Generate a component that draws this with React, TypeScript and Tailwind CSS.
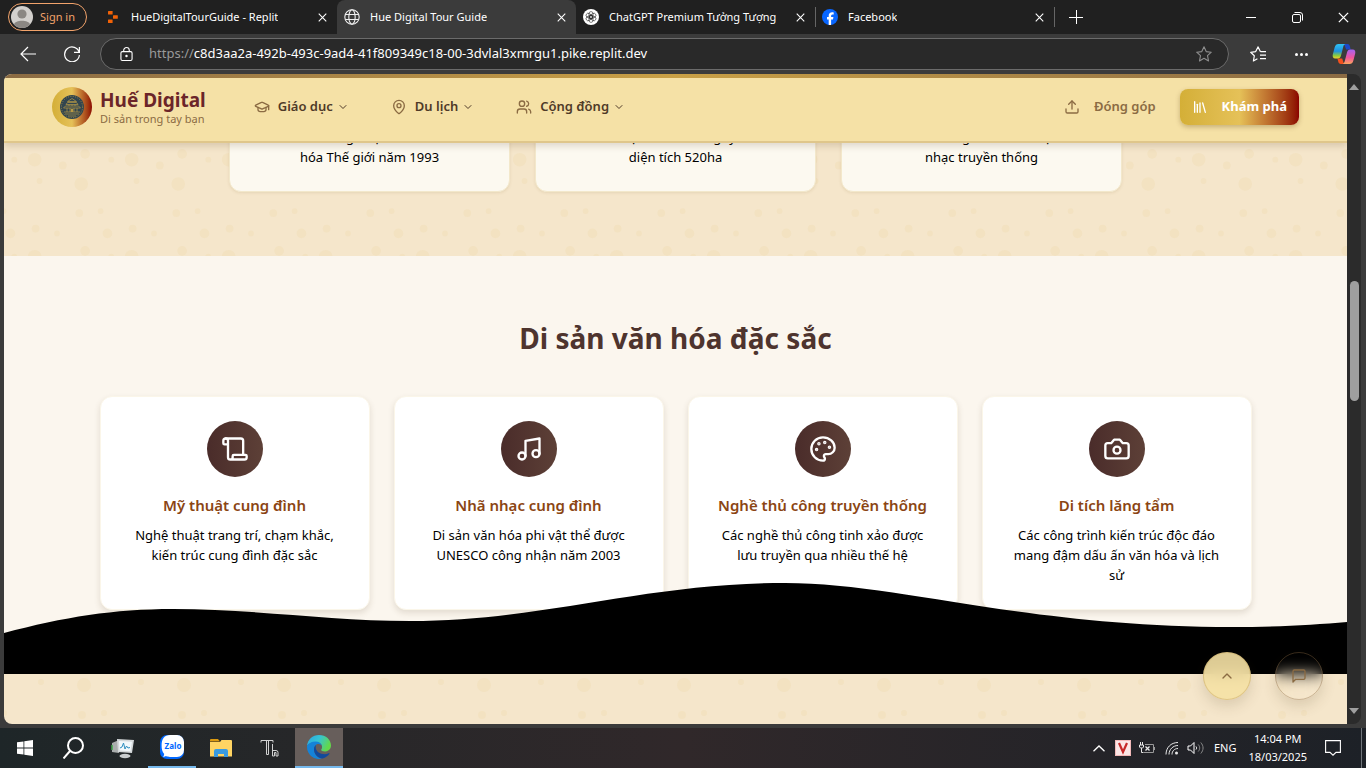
import React from "react";
import {
  ChevronDown,
  ChevronUp,
  GraduationCap,
  Library,
  MapPin,
  Music,
  Scroll,
  Upload,
  Users,
} from "lucide-react";

type IconProps = { className?: string };

function PaletteIcon({ className }: IconProps) {
  return (
    <svg viewBox="0 0 24 24" fill="none" stroke="currentColor" strokeWidth="2" strokeLinecap="round" strokeLinejoin="round" className={className} aria-hidden="true">
      <circle cx="13.5" cy="6.5" r=".5" fill="currentColor" />
      <circle cx="17.5" cy="10.5" r=".5" fill="currentColor" />
      <circle cx="8.5" cy="7.5" r=".5" fill="currentColor" />
      <circle cx="6.5" cy="12.5" r=".5" fill="currentColor" />
      <path d="M12 2C6.5 2 2 6.5 2 12s4.5 10 10 10c.926 0 1.648-.746 1.648-1.688 0-.437-.18-.835-.437-1.125-.29-.289-.438-.652-.438-1.125a1.64 1.64 0 0 1 1.668-1.668h1.996c3.051 0 5.555-2.503 5.555-5.554C21.965 6.012 17.461 2 12 2z" />
    </svg>
  );
}

function CameraIcon({ className }: IconProps) {
  return (
    <svg viewBox="0 0 24 24" fill="none" stroke="currentColor" strokeWidth="2" strokeLinecap="round" strokeLinejoin="round" className={className} aria-hidden="true">
      <path d="M14.5 4h-5L7 7H4a2 2 0 0 0-2 2v9a2 2 0 0 0 2 2h16a2 2 0 0 0 2-2V9a2 2 0 0 0-2-2h-3l-2.5-3z" />
      <circle cx="12" cy="13" r="3" />
    </svg>
  );
}

function MessageIcon({ className }: IconProps) {
  return (
    <svg viewBox="0 0 24 24" fill="none" stroke="currentColor" strokeWidth="2" strokeLinecap="round" strokeLinejoin="round" className={className} aria-hidden="true">
      <path d="M21 15a2 2 0 0 1-2 2H7l-4 4V5a2 2 0 0 1 2-2h14a2 2 0 0 1 2 2z" />
    </svg>
  );
}

function CloseIcon({ className }: IconProps) {
  return (
    <svg viewBox="0 0 10 10" fill="none" stroke="currentColor" strokeWidth="1.2" className={className} aria-hidden="true">
      <path d="M.8.8l8.4 8.4M9.2.8L.8 9.2" />
    </svg>
  );
}

function ReplitIcon() {
  return (
    <svg viewBox="0 0 16 16" className="h-4 w-4 shrink-0" fill="#f26207" aria-hidden="true">
      <rect x="3" y="2" width="4.600" height="3.600" rx=".5" />
      <rect x="8" y="6.200" width="4.800" height="3.600" rx=".5" />
      <rect x="3" y="10.400" width="4.600" height="3.600" rx=".5" />
    </svg>
  );
}

function GlobeIcon() {
  return (
    <svg viewBox="0 0 16 16" fill="none" stroke="#f0f0f0" strokeWidth="1.100" className="h-4 w-4 shrink-0" aria-hidden="true">
      <circle cx="8" cy="8" r="7.200" />
      <ellipse cx="8" cy="8" rx="3.200" ry="7.200" />
      <path d="M1.400 5.500h13.200M1.400 10.500h13.200" />
    </svg>
  );
}

function ChatIcon() {
  return (
    <svg viewBox="0 0 16 16" className="h-4 w-4 shrink-0" aria-hidden="true">
      <circle cx="8" cy="8" r="8" fill="#fff" />
      <g fill="none" stroke="#222" strokeWidth=".6">
        <rect x="6" y="2.600" width="4" height="6.800" rx="2" />
        <rect x="6" y="2.600" width="4" height="6.800" rx="2" transform="rotate(60 8 8)" />
        <rect x="6" y="2.600" width="4" height="6.800" rx="2" transform="rotate(120 8 8)" />
        <rect x="6" y="2.600" width="4" height="6.800" rx="2" transform="rotate(180 8 8)" />
        <rect x="6" y="2.600" width="4" height="6.800" rx="2" transform="rotate(240 8 8)" />
        <rect x="6" y="2.600" width="4" height="6.800" rx="2" transform="rotate(300 8 8)" />
      </g>
    </svg>
  );
}

function FacebookIcon() {
  return (
    <svg viewBox="0 0 16 16" className="h-4 w-4 shrink-0" aria-hidden="true">
      <circle cx="8" cy="8" r="8" fill="#0866ff" />
      <path fill="#fff" d="M6.700 15.900v-5.400H5V8.100h1.700V7c0-2.600 1.200-3.800 3.600-3.800.4 0 1.100.1 1.400.2v2.100h-.9c-1.200 0-1.700.5-1.700 1.600v1h2.300l-.4 2.400H9.100v5.400a8 8 0 0 1-2.400 0z" />
    </svg>
  );
}

function Tab({ icon, title, active, divider }: { icon: React.ReactNode; title: string; active?: boolean; divider?: boolean }) {
  return (
    <div
      className={
        active
          ? "flex h-[34px] w-[239px] items-center rounded-t-lg bg-[#3b3b3b] pl-[7px] pr-[7px]"
          : "flex h-[34px] w-[239px] items-center pl-[7px] pr-[7px]"
      }
    >
      <button type="button" className="flex min-w-0 flex-1 items-center gap-[10px] text-left text-[11px] text-white">
        {icon}
        <span className="truncate">{title}</span>
      </button>
      <button type="button" aria-label={"Đóng " + title} className="flex h-4 w-4 items-center justify-center text-white">
        <CloseIcon className="h-[9px] w-[9px]" />
      </button>
      {divider && <span className="ml-[7px] -mr-2 h-5 w-px bg-[#666]" />}
    </div>
  );
}

function TabBar() {
  return (
    <div className="flex h-[34px] shrink-0 items-center bg-[#202020]">
      <button type="button" className="ml-2 mr-[11px] flex h-7 w-[79px] items-center gap-[7px] rounded-full border border-[#f2a36b] pl-[2px] text-[11px] text-[#f2a36b]">
        <svg viewBox="0 0 22 22" className="h-[22px] w-[22px]" aria-hidden="true">
          <circle cx="11" cy="11" r="11" fill="#d3d0cd" />
          <circle cx="11" cy="8" r="4.600" fill="#8b8783" />
          <path d="M3 18.500c1-5 15-5 16 0a11 11 0 0 1-16 0z" fill="#8b8783" />
        </svg>
        Sign in
      </button>
      <Tab icon={<ReplitIcon />} title="HueDigitalTourGuide - Replit" />
      <Tab icon={<GlobeIcon />} title="Hue Digital Tour Guide" active />
      <Tab icon={<ChatIcon />} title="ChatGPT Premium Tưởng Tượng" divider />
      <Tab icon={<FacebookIcon />} title="Facebook" divider />
      <button type="button" aria-label="Thẻ mới" className="ml-3 p-[3px] text-white">
        <svg viewBox="0 0 14 14" fill="none" stroke="currentColor" className="h-[14px] w-[14px]" aria-hidden="true">
          <path d="M7.500 0v14M0 7.500h14" />
        </svg>
      </button>
      <div className="ml-auto flex text-white">
        <button type="button" aria-label="Thu nhỏ" className="flex h-[34px] w-[46px] items-center justify-center">
          <span className="h-px w-[10px] bg-white" />
        </button>
        <button type="button" aria-label="Khôi phục" className="flex h-[34px] w-[46px] items-center justify-center">
          <svg viewBox="0 0 11 11" fill="none" stroke="currentColor" className="h-[11px] w-[11px]" aria-hidden="true">
            <rect x=".5" y="2.500" width="8" height="8" rx="1.500" />
            <path d="M2.500 .5h5.500a2.500 2.500 0 0 1 2.500 2.500v5.500" />
          </svg>
        </button>
        <button type="button" aria-label="Đóng cửa sổ" className="flex h-[34px] w-[46px] items-center justify-center">
          <CloseIcon className="h-[11px] w-[11px]" />
        </button>
      </div>
    </div>
  );
}

function Toolbar() {
  return (
    <div className="flex h-10 shrink-0 items-center bg-[#3b3b3b] pr-[10px] text-white">
      <button type="button" aria-label="Quay lại" className="ml-5">
        <svg viewBox="0 0 16 16" fill="none" stroke="currentColor" strokeWidth="1.200" className="h-4 w-4" aria-hidden="true">
          <path d="M16 8H1M8 1L1 8l7 7" />
        </svg>
      </button>
      <button type="button" aria-label="Tải lại" className="ml-7">
        <svg viewBox="0 0 16 16" fill="none" stroke="currentColor" strokeWidth="1.200" className="h-4 w-4" aria-hidden="true">
          <path d="M15.200 6.500A7.400 7.400 0 1 0 15.400 9M15.400 1v5.300H10" />
        </svg>
      </button>
      <label className="ml-5 flex h-8 flex-1 items-center rounded-full border border-[#6b6b6b] bg-[#292929] pl-[19px] pr-4 text-[13px]">
        <svg viewBox="0 0 14 16" fill="none" stroke="currentColor" strokeWidth="1.200" className="mr-4 h-4 w-[13px] shrink-0" aria-hidden="true">
          <rect x="1" y="5.500" width="12" height="9.500" rx="1.500" />
          <path d="M4 5.500V4a3 3 0 0 1 6 0v1.500" />
          <circle cx="7" cy="10.200" r=".7" fill="currentColor" />
        </svg>
        <span className="text-[#9a9a9a]">https://</span>
        <input
          aria-label="Địa chỉ trang"
          className="min-w-0 flex-1 bg-transparent text-white outline-none"
          defaultValue="c8d3aa2a-492b-493c-9ad4-41f809349c18-00-3dvlal3xmrgu1.pike.replit.dev"
        />
        <svg viewBox="0 0 16 16" fill="none" stroke="#8e8e8e" strokeWidth="1.100" strokeLinejoin="round" className="h-4 w-4" aria-hidden="true">
          <path d="M8 .8l2.200 4.800 5.100.6-3.800 3.500 1 5.200L8 12.300l-4.500 2.600 1-5.200L.7 6.200l5.100-.6z" />
        </svg>
      </label>
      <button type="button" aria-label="Mục ưa thích" className="ml-[21px]">
        <svg viewBox="0 0 16 16" fill="none" stroke="currentColor" strokeWidth="1.200" strokeLinejoin="round" className="h-4 w-4" aria-hidden="true">
          <path d="M10.500 5.700L8 .9 5.700 5.600l-5 .7 3.600 3.500-.9 5.200 4-2.200M10.500 5.700H16M10 9.200h6M10 12.700h6" />
        </svg>
      </button>
      <button type="button" aria-label="Thêm" className="ml-[29px] flex gap-[2px]">
        <span className="h-[3px] w-[3px] rounded-full bg-white" />
        <span className="h-[3px] w-[3px] rounded-full bg-white" />
        <span className="h-[3px] w-[3px] rounded-full bg-white" />
      </button>
      <button type="button" aria-label="Copilot" className="ml-6">
        <svg viewBox="0 0 24 22" className="h-[22px] w-6" aria-hidden="true">
          <defs>
            <linearGradient id="copilotA" x1="0" y1="0" x2="0" y2="1">
              <stop offset="0" stopColor="#2fc4f5" />
              <stop offset=".5" stopColor="#1f8fe0" />
              <stop offset=".8" stopColor="#8ccb3c" />
              <stop offset="1" stopColor="#f2d02e" />
            </linearGradient>
            <linearGradient id="copilotB" x1="0" y1="0" x2="0" y2="1">
              <stop offset="0" stopColor="#a463f2" />
              <stop offset=".55" stopColor="#f0559f" />
              <stop offset="1" stopColor="#fba45c" />
            </linearGradient>
          </defs>
          <path d="M12 1h3.500c1.400 0 2 .8 2.300 2l.9 3.500h-4.500z" fill="#1c48c8" />
          <path d="M12 21H8.700c-1.400 0-2-.9-2.400-2.200L5.400 15.500h4.800z" fill="#f4511e" />
          <path d="M6.500 1h7c-1.400.4-1.900 1.400-2.300 2.900L9 12.500c-.5 2-1.400 3-3.300 3H3.300C1 15.500.3 13.600.8 11.500l1.900-7.200C3.300 2.200 4.500 1 6.500 1z" fill="url(#copilotA)" />
          <path d="M17.500 21h-7c1.400-.4 1.900-1.400 2.300-2.900L15 9.500c.5-2 1.400-3 3.300-3h2.400c2.300 0 3 1.900 2.500 4l-1.900 7.200c-.6 2.100-1.800 3.300-3.800 3.300z" fill="url(#copilotB)" />
        </svg>
      </button>
    </div>
  );
}

const DOTS: [number, number, number][] = [
  [11, 11, 7], [59, 36, 7], [16, 33, 3], [79, 64, 3], [34, 87, 3], [90, 11, 3],
  [12, 82, 4], [40, 17, 4], [63, 5, 5], [57, 66, 4], [86, 87, 5],
];

function DotPattern({ id, size, x, y }: { id: string; size: number; x: number; y: number }) {
  return (
    <svg className="absolute inset-0 h-full w-full" aria-hidden="true">
      <defs>
        <pattern id={id} width={size} height={size} x={x} y={y} patternUnits="userSpaceOnUse" viewBox="0 0 100 100">
          {DOTS.map(([cx, cy, r]) => (
            <circle key={cx + "-" + cy} cx={cx} cy={cy} r={r} fill="#d4af37" fillOpacity=".07" />
          ))}
        </pattern>
      </defs>
      <rect width="100%" height="100%" fill={"url(#" + id + ")"} />
    </svg>
  );
}

function LogoMark() {
  return (
    <svg viewBox="0 0 24 24" className="h-6 w-6" fill="none" aria-hidden="true">
      <circle cx="12" cy="12" r="12" fill="#31454f" />
      <g stroke="#b99a45" strokeWidth=".7">
        <circle cx="12" cy="12" r="10.600" strokeDasharray="1 1.400" />
        <path d="M12 3.500l4.500 3h-9zM6 9.500l1.500-2h9l1.500 2zM3.500 13l2-2h13l2 2zM4 17h16M5 19h14M8 21h8" />
        <path d="M7 13v4M10 13v4M14 13v4M17 13v4M9 9.500V11M15 9.500V11M12 9.500V11" />
      </g>
      <path d="M10.800 14h2.400v3h-2.400z" fill="#b99a45" />
    </svg>
  );
}

const NAV = [
  { label: "Giáo dục", Icon: GraduationCap },
  { label: "Du lịch", Icon: MapPin },
  { label: "Cộng đồng", Icon: Users },
];

function SiteHeader() {
  return (
    <header className="absolute inset-x-0 top-0 z-10 shadow-[0_3px_7px_rgba(60,40,10,0.16)]">
      <div className="h-1 bg-linear-to-r from-[#8b6b43] via-[#c9a045] to-[#8b6b43]" />
      <div className="flex h-[65px] items-center border-b-2 border-[#dfc68b] bg-[#f5e1a6] px-12 pb-[6px]">
        <a href="#home" className="flex items-center gap-2">
          <span className="flex h-10 w-10 items-center justify-center rounded-full bg-linear-to-r from-[#d4af37] via-[#e5c158] to-[#8b0000]">
            <LogoMark />
          </span>
          <span className="flex flex-col">
            <span className="text-[19px] leading-6 font-bold text-[#6b2529]">Huế Digital</span>
            <span className="text-[11px] leading-[14px] text-[#8b6b43]">Di sản trong tay bạn</span>
          </span>
        </a>
        <nav className="ml-12 flex gap-[42px]">
          {NAV.map(({ label, Icon }) => (
            <button key={label} type="button" className="flex items-center text-[13px] font-semibold text-[#4f3a28]">
              <Icon className="mr-2 h-4 w-4 text-[#8b6b43]" strokeWidth={2} />
              {label}
              <ChevronDown className="ml-1 h-3 w-3" strokeWidth={2} />
            </button>
          ))}
        </nav>
        <div className="ml-auto flex items-center gap-6">
          <button type="button" className="flex items-center gap-[14px] text-[13px] font-semibold text-[#8b6b43]">
            <Upload className="h-4 w-4" strokeWidth={2} />
            Đóng góp
          </button>
          <button
            type="button"
            className="flex h-9 items-center gap-[14px] rounded-lg bg-linear-to-r from-[#d4af37] via-[#e5c158] to-[#8b0000] px-3 text-[13px] font-bold text-white shadow-[0_2px_5px_rgba(90,60,10,0.3)]"
          >
            <Library className="h-4 w-4" strokeWidth={2} />
            Khám phá
          </button>
        </div>
      </div>
    </header>
  );
}

const FACTS = [
  ["UNESCO công nhận là Di sản Văn", "hóa Thế giới năm 1993"],
  ["Kinh đô lịch sử triều Nguyễn với", "diện tích 520ha"],
  ["Tinh hoa cung đình và lễ hội của", "nhạc truyền thống"],
];

const HERITAGE = [
  { title: "Mỹ thuật cung đình", text: "Nghệ thuật trang trí, chạm khắc, kiến trúc cung đình đặc sắc", icon: <Scroll className="h-7 w-7" /> },
  { title: "Nhã nhạc cung đình", text: "Di sản văn hóa phi vật thể được UNESCO công nhận năm 2003", icon: <Music className="h-7 w-7" /> },
  { title: "Nghề thủ công truyền thống", text: "Các nghề thủ công tinh xảo được lưu truyền qua nhiều thế hệ", icon: <PaletteIcon className="h-7 w-7" /> },
  { title: "Di tích lăng tẩm", text: "Các công trình kiến trúc độc đáo mang đậm dấu ấn văn hóa và lịch sử", icon: <CameraIcon className="h-7 w-7" /> },
];

function Page() {
  return (
    <div className="relative flex min-w-0 flex-1 flex-col overflow-hidden rounded-l-lg bg-[#f5e6cb] text-black">
      <SiteHeader />
      <section className="relative flex h-[182px] shrink-0 items-end justify-center overflow-hidden pb-16">
        <DotPattern id="dotsTop" size={97} x={20} y={75} />
        <div className="relative grid w-full max-w-[893px] grid-cols-3 gap-[25px]">
          {FACTS.map(([first, second]) => (
            <div key={second} className="rounded-xl border border-[#f3e8cb] bg-[#fcf9f0] px-2 pt-6 pb-6 text-center text-[13px] leading-5 shadow-[0_1px_3px_rgba(120,90,30,0.12)]">
              <p>
                {first}
                <br />
                {second}
              </p>
            </div>
          ))}
        </div>
      </section>
      <section className="relative flex shrink-0 flex-col items-center bg-[#fbf6ee] px-6 py-16">
        <h2 className="text-[28px] leading-9 font-bold text-[#4e342e]">Di sản văn hóa đặc sắc</h2>
        <div className="mt-10 grid w-full max-w-6xl grid-cols-4 gap-6">
          {HERITAGE.map((item) => (
            <article key={item.title} className="flex flex-col items-center rounded-xl border border-[#fbf6e9] bg-white p-6 text-center shadow-[0_3px_6px_rgba(80,60,30,0.14)]">
              <div className="flex h-14 w-14 items-center justify-center rounded-full bg-linear-to-r from-[#4a2c2a] to-[#5d4037] text-white">
                {item.icon}
              </div>
              <h3 className="mt-4 text-[15px] leading-6 font-semibold whitespace-nowrap text-[#8b4513]">{item.title}</h3>
              <p className="mt-2 text-[13px] leading-5">{item.text}</p>
            </article>
          ))}
        </div>
        <svg viewBox="0 0 1343 91" preserveAspectRatio="none" className="absolute inset-x-0 bottom-0 h-[91px] w-full" aria-hidden="true">
          <path d="M0 50C60 34 110 26 169 26C250 26 326 38 406 38C540 38 640 0 781 0C895 0 1020 44 1228 44C1270 44 1310 42 1343 39V91H0Z" />
        </svg>
      </section>
      <section className="relative flex-1">
        <DotPattern id="dotsBottom" size={100} x={21} y={-25} />
      </section>
      <div className="absolute right-6 bottom-6 flex gap-6 text-[#8b6b43]">
        <button type="button" aria-label="Lên đầu trang" className="flex h-12 w-12 items-center justify-center rounded-full border border-[#c9a95f]/50 bg-[#f5e1a4]/90 shadow-[0_6px_14px_rgba(80,60,30,0.16)] backdrop-blur-sm">
          <ChevronUp className="h-4 w-4" />
        </button>
        <button type="button" aria-label="Trò chuyện" className="flex h-12 w-12 items-center justify-center rounded-full border border-[#8b6b43]/40 shadow-[0_6px_14px_rgba(80,60,30,0.16)] backdrop-blur-sm">
          <MessageIcon className="h-4 w-4" />
        </button>
      </div>
    </div>
  );
}

function Scrollbar() {
  return (
    <div className="flex w-[14px] flex-col items-center rounded-r-lg bg-[#2b2b2b] py-[10px]" aria-hidden="true">
      <svg viewBox="0 0 10 6" className="h-[6px] w-[10px] shrink-0" fill="#9f9f9f">
        <path d="M5 0l5 6H0z" />
      </svg>
      <span className="min-h-0 grow-[191]" />
      <span className="min-h-0 w-[9px] grow-[120] rounded-full bg-[#9f9f9f]" />
      <span className="min-h-0 grow-[307]" />
      <svg viewBox="0 0 10 6" className="h-[6px] w-[10px] shrink-0" fill="#9f9f9f">
        <path d="M5 6l5-6H0z" />
      </svg>
    </div>
  );
}

function TaskSlot({ label, className, children }: { label: string; className?: string; children: React.ReactNode }) {
  return (
    <button type="button" aria-label={label} className={"flex h-10 w-12 shrink-0 items-center justify-center " + (className ?? "")}>
      {children}
    </button>
  );
}

function Taskbar() {
  return (
    <div className="flex h-10 shrink-0 items-center bg-linear-to-r from-[#1e2628] via-[#30282a] to-[#1d2127] text-white">
      <div className="flex gap-px pl-px">
        <TaskSlot label="Bắt đầu">
          <svg viewBox="0 0 16 16" className="h-4 w-4" fill="#fff" aria-hidden="true">
            <path d="M0 2.300l6.500-.9v6.200H0zM7.300 1.300L16 0v7.600H7.300zM0 8.400h6.500v6.200L0 13.700zM7.300 8.400H16V16l-8.700-1.300z" />
          </svg>
        </TaskSlot>
        <TaskSlot label="Tìm kiếm">
          <svg viewBox="0 0 22 22" className="h-[22px] w-[22px]" fill="none" stroke="#fff" strokeWidth="2" aria-hidden="true">
            <circle cx="12.500" cy="8.500" r="7.500" />
            <path d="M7 14L.5 21.500" />
          </svg>
        </TaskSlot>
        <TaskSlot label="Giám sát hệ thống">
          <svg viewBox="0 0 24 22" className="h-[22px] w-6" aria-hidden="true">
            <path d="M1 6l7-3v13l-7-1z" fill="#a9adad" />
            <path d="M1 8v5" stroke="#3fa34a" strokeWidth="1.500" />
            <path d="M6 2l17 1-2 13-14-1z" fill="#d4d8da" />
            <path d="M8 4l13 .8-1.500 9.500L8.500 13.500z" fill="#f2f8fb" />
            <path d="M9 11l2-1 1.500-4L14 12l1.500-3 1.500 2 2-.5" fill="none" stroke="#2f8fc0" />
            <ellipse cx="14" cy="19" rx="5.500" ry="2.200" fill="#c9cdcf" />
          </svg>
        </TaskSlot>
        <TaskSlot label="Zalo" className="border-b-2 border-[#76b9ed]">
          <svg viewBox="0 0 24 24" className="h-6 w-6" aria-hidden="true">
            <rect width="24" height="24" rx="7" fill="#0068ff" />
            <path d="M10 0h7a7 7 0 0 1 7 7v8a7 7 0 0 1-7 7h-7c-1.500 0-3-.3-4-.9-.8.5-1.800.7-3 .6.8-.8 1.200-1.600 1.200-2.600C2.200 17 1.600 14 1.600 10.500 1.600 4 4.500 0 10 0z" fill="#fff" />
            <text x="13" y="14" textAnchor="middle" fontSize="8" fontWeight="700" fill="#0068ff">Zalo</text>
          </svg>
        </TaskSlot>
        <TaskSlot label="Thư mục">
          <svg viewBox="0 0 22 18" className="h-[18px] w-[22px]" aria-hidden="true">
            <path d="M0 1a1 1 0 0 1 1-1h7l2 2.500H0z" fill="#dc9a10" />
            <path d="M0 3h10l1.500-2H21a1 1 0 0 1 1 1v15.500H0z" fill="#ffd463" />
            <path d="M4 18v-6a2 2 0 0 1 2-2h10a2 2 0 0 1 2 2v6h-4v-3H8v3z" fill="#3a9be0" />
          </svg>
        </TaskSlot>
        <TaskSlot label="Th">
          <svg viewBox="0 0 20 20" className="h-5 w-5" fill="none" stroke="#d2d2d2" aria-hidden="true">
            <path d="M1 4.500v-2h12v2M6.500 3v13.500h2V3M12.500 6v12M12.500 12.500h3.500a2 2 0 0 1 2 2V18h-2v-3.500h-1.500V18h-2" />
          </svg>
        </TaskSlot>
        <TaskSlot label="Edge" className="border-b-2 border-[#76b9ed] bg-[#675e5b]">
          <svg viewBox="0 0 24 24" className="h-6 w-6" aria-hidden="true">
            <defs>
              <linearGradient id="edgeTop" x1="0" y1="0" x2="1" y2=".4">
                <stop offset="0" stopColor="#2aa5e0" />
                <stop offset=".5" stopColor="#35c3d6" />
                <stop offset="1" stopColor="#62d84b" />
              </linearGradient>
            </defs>
            <path d="M0 11C.6 4.500 5.600 0 12 0c7 0 12 4.800 12 10.500 0 3.600-2.800 6-6.200 6-2.400 0-3.900-.9-3.600-1.700.5-.7.9-1.600.9-2.800C15.100 8.600 11.500 7 8.500 7 4.500 7 1.500 9 0 11z" fill="url(#edgeTop)" />
            <path d="M0 11c1.500-3 4.800-4.600 8.500-4.600 3.500 0 6 1.900 6.500 4.600-.8-1.200-2-1.900-3.300-1.900-2.500 0-4.700 2-4.700 5.200 0 4.500 3.200 8.500 8 9.300A12 12 0 0 1 0 12z" fill="#1583d8" />
            <path d="M8.900 9.900C7.600 11 7 12.500 7 14.300c0 5 4 9.200 8.600 9.200 3-.8 5.400-2.600 7-5-.2-.5-.6-.4-1-.2-1.100.6-2.400.9-3.900.9-4.900 0-9-2.900-9-6.900 0-.9.200-1.700.2-2.400z" fill="#114a9c" />
          </svg>
        </TaskSlot>
      </div>
      <div className="ml-auto flex items-center text-[11px]">
        <svg viewBox="0 0 12 7" fill="none" stroke="#fff" strokeWidth="1.300" className="h-[7px] w-3" aria-hidden="true">
          <path d="M.5 6.300L6 1l5.500 5.300" />
        </svg>
        <svg viewBox="0 0 16 16" className="ml-[10px] h-4 w-4" aria-hidden="true">
          <rect width="16" height="16" fill="#f2b9b9" />
          <rect x="1" y="1" width="14" height="14" fill="#fbe6e6" />
          <path d="M4 3l4 9 4-9" fill="none" stroke="#c62828" strokeWidth="2.200" />
        </svg>
        <svg viewBox="0 0 17 12" fill="none" stroke="#e8e8e8" className="ml-2 h-3 w-[17px]" aria-hidden="true">
          <path d="M1.500 0v3M3.500 0v3M.5 3v2l1 1h2l1-1V3zM2.500 6v4.500h2" />
          <path d="M6 2.500h8.500v8H5M15.500 5v3" stroke="#9a9a9a" />
          <path d="M6.500 4.500l4 4M10.500 4.500l-4 4" strokeWidth="1.300" />
        </svg>
        <svg viewBox="0 0 14 14" fill="none" stroke="#e8e8e8" className="ml-[9px] h-[14px] w-[14px]" aria-hidden="true">
          <path d="M1 13.500C1 6.500 6 1.500 13 1.500M4 13.500c0-5 4-9 9-9M7 13.500c0-3.500 2.500-6 6-6" />
          <circle cx="11.500" cy="12" r="1.500" fill="#e8e8e8" stroke="none" />
        </svg>
        <svg viewBox="0 0 17 14" fill="none" stroke="#fff" className="ml-2 h-[14px] w-[17px]" aria-hidden="true">
          <path d="M1 5v4h2.500L7 12.500v-11L3.500 5zM9 5.500c.8 1 .8 2 0 3" />
          <path d="M11.200 3.500c2 2.300 2 4.700 0 7M13.800 1.500c3 3.500 3 7.500 0 11" stroke="#8a8a8a" />
        </svg>
        <span className="ml-[10px]">ENG</span>
        <div className="ml-3 text-center leading-[18px]">
          14:04 PM
          <br />
          18/03/2025
        </div>
        <svg viewBox="0 0 16 16" fill="none" stroke="#fff" strokeWidth="1.100" className="ml-[18px] h-4 w-4" aria-hidden="true">
          <path d="M.6 .6h14.800v11.800H11L8 15.200l-3-2.800H.6z" />
        </svg>
        <span className="mr-1 ml-5 h-10 w-px bg-[#70757a]" />
      </div>
    </div>
  );
}

export default function App() {
  return (
    <div className="flex h-screen flex-col overflow-hidden bg-[#3b3b3b] font-['Noto_Sans',sans-serif]">
      <TabBar />
      <Toolbar />
      <main className="flex min-h-0 flex-1 pr-[5px] pb-1 pl-1">
        <Page />
        <Scrollbar />
      </main>
      <Taskbar />
    </div>
  );
}
